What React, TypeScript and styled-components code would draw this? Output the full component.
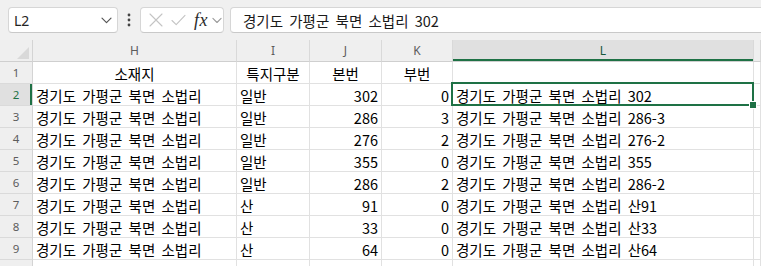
import React from "react";
import styled, { createGlobalStyle } from "styled-components";

const GREEN = "#1e7145";
const UI_FONT = `"Noto Sans", "Open Sans", "Liberation Sans", sans-serif`;
const CELL_FONT = `"Noto Sans CJK KR", "Noto Sans", sans-serif`;

const Global = createGlobalStyle`
  html, body { margin: 0; padding: 0; background: #ffffff; overflow: hidden; }
  * { box-sizing: border-box; }
`;

const Root = styled.div`
  width: 761px;
  height: 266px;
  overflow: hidden;
  display: flex;
  flex-direction: column;
  background: #ffffff;
`;

const Toolbar = styled.div`
  height: 40px;
  flex: none;
  display: flex;
  align-items: flex-start;
  padding: 7px 0 0 8px;
  background: #f0f0f0;
`;

const Box = styled.div`
  height: 26px;
  background: #ffffff;
  border: 1px solid #d6d6d6;
  border-bottom-color: #c9c9c9;
  border-radius: 4px;
  display: flex;
  align-items: center;
`;

const NameBox = styled(Box)`
  width: 110px;
  padding: 0 5px 0 5px;
  justify-content: space-between;
  font-family: ${UI_FONT};
  font-size: 14px;
  color: #242424;
`;

const Dots = styled.div`
  width: 22px;
  height: 26px;
  display: flex;
  align-items: center;
  justify-content: center;
`;

const FxBox = styled(Box)`
  width: 84px;
  padding: 0 0 0 5px;
`;

const IconSlot = styled.div<{ $w: number }>`
  width: ${(p) => p.$w}px;
  height: 24px;
  display: flex;
  align-items: center;
  justify-content: center;
`;

const Fx = styled.span`
  font-family: "Liberation Serif", "DejaVu Serif", serif;
  font-style: italic;
  font-size: 18px;
  color: #2b2b2b;
  letter-spacing: 0.5px;
  line-height: 1;
`;

const FormulaBar = styled(Box)`
  flex: 1;
  margin-left: 6px;
  margin-right: -6px;
  padding-left: 12px;
  font-family: ${CELL_FONT};
  font-size: 14.5px;
  word-spacing: 3px;
  color: #1a1a1a;
`;

const Sheet = styled.div`
  display: grid;
  grid-template-columns: 33px 204px 73px 72px 71px 301px 1fr;
  grid-auto-rows: 22px;
  font-family: ${CELL_FONT};
`;

const Corner = styled.div`
  background: #efefef;
  border-right: 1px solid #d4d4d4;
  border-bottom: 1px solid #cfcfcf;
  display: flex;
  justify-content: flex-end;
  align-items: flex-end;
  padding: 0 3px 2px 0;
`;

const Triangle = styled.div`
  width: 0;
  height: 0;
  border-left: 12px solid transparent;
  border-bottom: 12px solid #d9d9d9;
`;

const ColHead = styled.div<{ $sel?: boolean }>`
  background: ${(p) => (p.$sel ? "#e0e0e0" : "#efefef")};
  border-right: 1px solid #d9d9d9;
  border-bottom: 1px solid #cfcfcf;
  box-shadow: ${(p) => (p.$sel ? `inset 0 -2px 0 ${GREEN}` : "none")};
  display: flex;
  align-items: center;
  justify-content: center;
  font-family: ${UI_FONT};
  font-size: 12px;
  color: ${(p) => (p.$sel ? "#17583a" : "#5c5c5c")};
  padding-bottom: 1px;
`;

const RowHead = styled.div<{ $sel?: boolean }>`
  background: ${(p) => (p.$sel ? "#e0e0e0" : "#efefef")};
  border-right: 1px solid #d4d4d4;
  border-bottom: 1px solid #dadada;
  box-shadow: ${(p) => (p.$sel ? `inset -2px 0 0 ${GREEN}` : "none")};
  display: flex;
  align-items: center;
  justify-content: center;
  font-family: ${UI_FONT};
  font-size: 11.5px;
  color: ${(p) => (p.$sel ? GREEN : "#5c5c5c")};
`;

const Cell = styled.div<{ $align?: "left" | "right" | "center" }>`
  position: relative;
  border-right: 1px solid #e1e1e1;
  border-bottom: 1px solid #e1e1e1;
  display: flex;
  align-items: center;
  justify-content: ${(p) =>
    p.$align === "right" ? "flex-end" : p.$align === "center" ? "center" : "flex-start"};
  padding: 1px 3px 0 3px;
  font-size: 14.5px;
  word-spacing: 3px;
  color: #000000;
  white-space: nowrap;
`;

const Selection = styled.div`
  position: absolute;
  z-index: 2;
  top: -2px;
  left: -2px;
  right: -1px;
  bottom: -1px;
  border: 2px solid ${GREEN};
  pointer-events: none;
`;

const FillHandle = styled.div`
  position: absolute;
  right: -5px;
  bottom: -5px;
  width: 8px;
  height: 8px;
  background: ${GREEN};
  border: 1px solid #ffffff;
`;

const Chevron = ({ color = "#555" }: { color?: string }) => (
  <svg width="11" height="7" viewBox="0 0 11 7" fill="none">
    <path d="M1 1.2 L5.5 5.7 L10 1.2" stroke={color} strokeWidth="1.2" strokeLinecap="round" strokeLinejoin="round" />
  </svg>
);

const VDots = () => (
  <svg width="4" height="14" viewBox="0 0 4 14">
    <circle cx="2" cy="2" r="1.4" fill="#444" />
    <circle cx="2" cy="7" r="1.4" fill="#444" />
    <circle cx="2" cy="12" r="1.4" fill="#444" />
  </svg>
);

const Cross = () => (
  <svg width="14" height="14" viewBox="0 0 14 14" fill="none">
    <path d="M1 1 L13 13 M13 1 L1 13" stroke="#c4c4c4" strokeWidth="1.1" strokeLinecap="round" />
  </svg>
);

const Check = () => (
  <svg width="15" height="12" viewBox="0 0 15 12" fill="none">
    <path d="M1 6.5 L5.2 10.7 L14 1.3" stroke="#c4c4c4" strokeWidth="1.1" strokeLinecap="round" strokeLinejoin="round" />
  </svg>
);

type Row = { addr: string; kind: string; main: number; sub: number; full: string };

const ADDR = "경기도 가평군 북면 소법리";
const rows: Row[] = [
  { addr: ADDR, kind: "일반", main: 302, sub: 0, full: `${ADDR} 302` },
  { addr: ADDR, kind: "일반", main: 286, sub: 3, full: `${ADDR} 286-3` },
  { addr: ADDR, kind: "일반", main: 276, sub: 2, full: `${ADDR} 276-2` },
  { addr: ADDR, kind: "일반", main: 355, sub: 0, full: `${ADDR} 355` },
  { addr: ADDR, kind: "일반", main: 286, sub: 2, full: `${ADDR} 286-2` },
  { addr: ADDR, kind: "산", main: 91, sub: 0, full: `${ADDR} 산91` },
  { addr: ADDR, kind: "산", main: 33, sub: 0, full: `${ADDR} 산33` },
  { addr: ADDR, kind: "산", main: 64, sub: 0, full: `${ADDR} 산64` },
];

const cols = ["H", "I", "J", "K", "L", ""];

export default function App() {
  return (
    <Root>
      <Global />
      <Toolbar>
        <NameBox>
          <span>L2</span>
          <Chevron />
        </NameBox>
        <Dots>
          <VDots />
        </Dots>
        <FxBox>
          <IconSlot $w={20}>
            <Cross />
          </IconSlot>
          <IconSlot $w={24}>
            <Check />
          </IconSlot>
          <IconSlot $w={22}>
            <Fx>fx</Fx>
          </IconSlot>
          <IconSlot $w={10}>
            <Chevron color="#9a9a9a" />
          </IconSlot>
        </FxBox>
        <FormulaBar>{`${ADDR} 302`}</FormulaBar>
      </Toolbar>
      <Sheet>
        <Corner>
          <Triangle />
        </Corner>
        {cols.map((c, i) => (
          <ColHead key={i} $sel={c === "L"}>
            {c}
          </ColHead>
        ))}

        <RowHead>1</RowHead>
        <Cell $align="center">소재지</Cell>
        <Cell $align="center">특지구분</Cell>
        <Cell $align="center">본번</Cell>
        <Cell $align="center">부번</Cell>
        <Cell />
        <Cell />

        {rows.map((r, i) => {
          const n = i + 2;
          const sel = n === 2;
          return (
            <React.Fragment key={n}>
              <RowHead $sel={sel}>{n}</RowHead>
              <Cell>{r.addr}</Cell>
              <Cell>{r.kind}</Cell>
              <Cell $align="right">{r.main}</Cell>
              <Cell $align="right">{r.sub}</Cell>
              <Cell>
                {r.full}
                {sel && (
                  <Selection>
                    <FillHandle />
                  </Selection>
                )}
              </Cell>
              <Cell />
            </React.Fragment>
          );
        })}

        <RowHead />
        <Cell />
        <Cell />
        <Cell />
        <Cell />
        <Cell />
        <Cell />
      </Sheet>
    </Root>
  );
}
